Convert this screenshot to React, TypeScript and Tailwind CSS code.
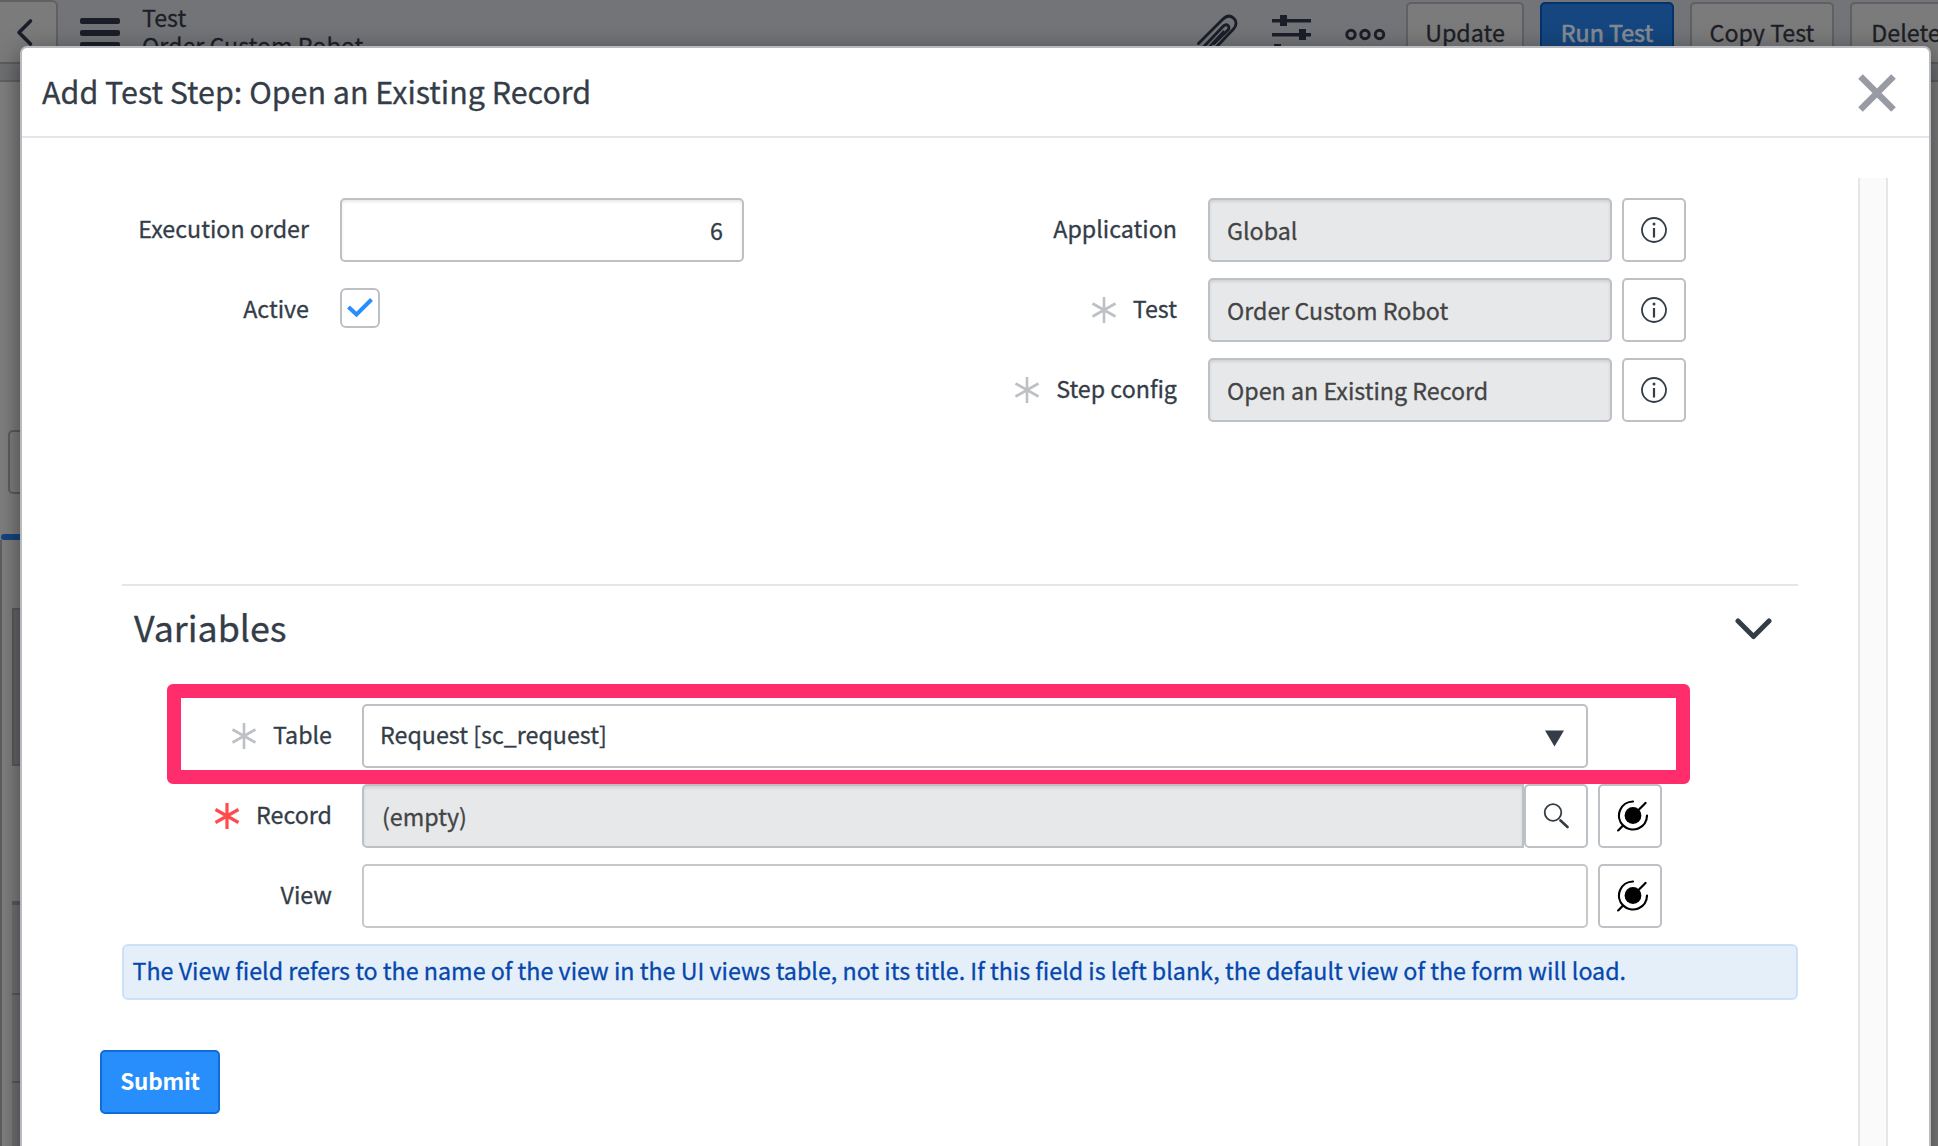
import React from "react";

const Star = ({ red }: { red?: boolean }) => (
  <svg width="26" height="28" viewBox="0 0 26 28" className={red ? "text-[#ff4b4b]" : "text-[#bdc0c4]"}>
    <path d="M13 1v26M1.5 7.5l23 13M24.5 7.5l-23 13" stroke="currentColor" strokeWidth={red ? 3.2 : 2.6} fill="none" />
  </svg>
);

const Label = ({ text, star, className = "" }: { text: string; star?: "gray" | "red"; className?: string }) => (
  <div className={`flex h-16 shrink-0 items-center justify-end gap-4 ${className}`}>
    {star && <Star red={star === "red"} />}
    <span className="-translate-y-px leading-none">{text}</span>
  </div>
);

const box = "flex h-16 shrink-0 items-center rounded-[5px] border-2 border-[#bdc0c4]";
const inner = "shadow-[inset_0_2px_3px_rgba(0,0,0,0.09)]";

const InfoButton = () => (
  <button className={`${box} ml-[10px] w-16 justify-center bg-white`}>
    <svg width="26" height="26" viewBox="0 0 26 26" fill="none" stroke="#343d47">
      <circle cx="13" cy="13" r="12" strokeWidth="1.8" />
      <path d="M13 11v9.5" strokeWidth="2.2" />
      <circle cx="13" cy="7" r="1.5" fill="#343d47" stroke="none" />
    </svg>
  </button>
);

const PillButton = () => (
  <button className={`${box} ml-[10px] w-16 justify-center bg-white`}>
    <svg width="32" height="32" viewBox="0 0 32 32" fill="none" stroke="#000" strokeWidth="2.2" strokeLinecap="round" className="translate-x-[3px] -translate-y-[0.5px]">
      <circle cx="16" cy="16" r="8.4" fill="#000" stroke="none" />
      <path d="M16 2A14 14 0 0 0 6.1 25.900A14 14 0 0 0 30 16M22 10l6.500-6.600M6 26l-5 5.200" />
    </svg>
  </button>
);

const ReadOnly = ({ label, value, star }: { label: string; value: string; star?: "gray" }) => (
  <div className="flex">
    <Label text={label} star={star} className="mr-[31px] w-[201px]" />
    <div className={`${box} ${inner} w-[404px] bg-[#e6e8ea] px-[17px] text-[#444]`}>
      <span>{value}</span>
    </div>
    <InfoButton />
  </div>
);

const barButton = "flex h-16 shrink-0 items-center justify-center rounded-[5px] border-2 pb-[3px] leading-none";

export default function App() {
  return (
    <div className="relative h-[1146px] w-[1938px] overflow-hidden bg-[#808080] font-['Noto_Sans_CJK_SC','Noto_Sans',sans-serif] text-[23.25px] text-[#343d47] [-webkit-text-stroke:0.3px]">
      <div className="flex h-[64px] items-start overflow-hidden border-b-2 border-[#5d5e60] bg-[#737477] text-[#1c1f26]">
        <div className="flex h-[64px] w-[58px] shrink-0 rounded-tr-[6px] border-2 border-l-0 border-[#606060] bg-[#7b7b7b]">
          <svg width="20" height="30" viewBox="0 0 20 30" className="mt-[16px] ml-[15px]" fill="none" stroke="#1b1e28" strokeWidth="3.6" strokeLinecap="round" strokeLinejoin="round">
            <path d="M15.500 3L4 14.500L15.500 26" />
          </svg>
        </div>
        <div className="mt-[18px] ml-[22px] flex w-10 shrink-0 flex-col gap-[6px]">
          <div className="h-[6px] rounded-[2px] bg-[#1b1e28]" />
          <div className="h-[6px] rounded-[2px] bg-[#1b1e28]" />
          <div className="h-[6px] rounded-[2px] bg-[#1b1e28]" />
        </div>
        <div className="mt-[3px] ml-[22px] w-[1050px] shrink-0 leading-[28px]">
          <div>Test</div>
          <div>Order Custom Robot</div>
        </div>
        <svg width="46" height="50" viewBox="0 0 46 50" className="mt-[12px] ml-[4px] shrink-0" fill="none" stroke="#1b1e28" strokeWidth="2.900" strokeLinecap="round">
          <path d="M2.500 31.500L26.500 7.500C31 3 35 3.500 38 6.500C41 9.500 40.500 14 37.500 17L18 37.500M8 34.500L26 15.500C28.500 12.500 30.500 12 32 13.500C33.500 15 33 17 31.500 18.500L18 31.500" />
          <path d="M13 35L27.500 19.500" strokeWidth="2.200" />
        </svg>
        <svg width="40" height="50" viewBox="0 0 40 50" className="mt-0 ml-[30px] shrink-0" fill="#1b1e28">
          <path d="M0 19h39v3.500H0zM8 15h7v11H8zM0 33h39v3.500H0zM27 29h7v11h-7zM0 47h39v3H0zM2 44h7v6H2z" />
        </svg>
        <svg width="42" height="14" viewBox="0 0 42 14" className="mt-[28px] ml-[33px] shrink-0" fill="none" stroke="#1b1e28" strokeWidth="3">
          <circle cx="6" cy="6.500" r="4.200" />
          <circle cx="20" cy="6.500" r="4.200" />
          <circle cx="34.500" cy="6.500" r="4.200" />
        </svg>
        <div className="mt-[2px] ml-[19px] flex shrink-0 gap-4">
          <div className={`${barButton} w-[118px] border-[#5f6063] bg-[#7b7b7b]`}>Update</div>
          <div className={`${barButton} w-[134px] border-[#03336d] bg-[#15467f] text-[#848a92] [-webkit-text-stroke:0.7px]`}>Run Test</div>
          <div className={`${barButton} w-[144px] border-[#5f6063] bg-[#7b7b7b]`}>Copy Test</div>
          <div className={`${barButton} w-[112px] border-[#5f6063] bg-[#7b7b7b]`}>Delete</div>
        </div>
      </div>
      <div className="h-[18px] border-b-2 border-[#626262] bg-[#6e7072]" />
      <div className="mt-[348px] ml-[8px] h-16 w-20 rounded-[5px] border-2 border-[#5f5f5f]" />
      <div className="mt-[40px] ml-[1px] h-[6px] w-20 rounded-[3px] bg-[#15467f]" />
      <div className="h-[620px] border-l-2 border-[#5f5f5f] pt-[68px] pl-[10px]">
        <div className="h-[158px] w-20 border-2 border-[#5c5d5f] bg-[#67696b]" />
        <div className="mt-[135px] h-[92px] w-20 border-t-4 border-[#5c5d5f] bg-[#737476]" />
        <div className="h-[88px] w-20 border-t-2 border-[#5c5d5f] bg-[#737476]" />
        <div className="h-[88px] w-20 border-t-2 border-[#5c5d5f] bg-[#737476]" />
      </div>

      <div className="absolute top-[46px] left-[20px] flex h-[1200px] w-[1911px] flex-col rounded-[7px] border-2 border-[#b9babf] bg-white shadow-[0_8px_26px_rgba(0,0,0,0.5)]">
        <div className="flex h-[90px] shrink-0 items-center border-b-2 border-[#e5e6e7] pr-[33px] pl-[20px]">
          <h1 className="-translate-y-px text-[30.45px] leading-none">Add Test Step: Open an Existing Record</h1>
          <svg width="38" height="38" viewBox="0 0 38 38" className="ml-auto translate-y-px" fill="none" stroke="#989ba3" strokeWidth="6.500">
            <path d="M2.500 2.500l33 33M35.500 2.500l-33 33" />
          </svg>
        </div>
        <div className="mt-[40px] flex flex-1">
          <div className="w-[1836px] shrink-0 pt-[20px]">
            <div className="flex">
              <div className="flex w-[944px] flex-col">
                <div className="flex">
                  <Label text="Execution order" className="mr-[31px] ml-[87px] w-[200px]" />
                  <div className={`${box} ${inner} w-[404px] justify-end px-[19px]`}>
                    <span>6</span>
                  </div>
                </div>
                <div className="mt-4 flex">
                  <Label text="Active" className="mr-[31px] ml-[87px] w-[200px]" />
                  <div className="mt-[10px] flex h-10 w-10 items-center justify-center rounded-[6px] border-2 border-[#bdc0c4]">
                    <svg width="26" height="20" viewBox="0 0 26 20" fill="none" stroke="#278efc" strokeWidth="4">
                      <path d="M1.500 9L9.500 16.500L24.500 1.500" />
                    </svg>
                  </div>
                </div>
              </div>
              <div className="flex flex-col gap-4 pl-[10px]">
                <ReadOnly label="Application" value="Global" />
                <ReadOnly label="Test" value="Order Custom Robot" star="gray" />
                <ReadOnly label="Step config" value="Open an Existing Record" star="gray" />
              </div>
            </div>

            <div className="mt-[162px] ml-[100px] w-[1676px] border-t-2 border-[#e5e6e7]">
              <div className="flex h-[84px] items-center pr-[25px] pl-[12px]">
                <h2 className="-translate-y-px text-[35.8px] leading-none">Variables</h2>
                <svg width="38" height="22" viewBox="0 0 38 22" className="ml-auto translate-y-px" fill="none" stroke="#343d47" strokeWidth="5" strokeLinecap="round" strokeLinejoin="round">
                  <path d="M3 3L18.500 18.500L34 3" />
                </svg>
              </div>
              <div className="relative mt-[34px] flex">
                <Label text="Table" star="gray" className="mr-[30px] w-[210px]" />
                <div className={`${box} w-[1226px] justify-between pr-[22px] pl-[16px]`}>
                  <span className="-translate-y-px leading-none">Request [sc_request]</span>
                  <svg width="19" height="17" viewBox="0 0 19 17" className="translate-y-[2px]" fill="#343d47">
                    <path d="M0 .5h19L9.500 16.500z" />
                  </svg>
                </div>
                <div className="absolute top-[-20px] left-[45px] h-[100px] w-[1523px] rounded-[6px] border-[14px] border-[#ff2d6b]" />
              </div>
              <div className="mt-4 flex">
                <Label text="Record" star="red" className="mr-[30px] w-[210px]" />
                <div className={`${box} ${inner} w-[1162px] rounded-r-none bg-[#e6e8ea] px-[18px] text-[#444]`}>
                  <span>(empty)</span>
                </div>
                <button className={`${box} w-16 justify-center bg-white`}>
                  <svg width="26" height="26" viewBox="0 0 26 26" fill="none" stroke="#343d47" strokeWidth="1.800">
                    <circle cx="10" cy="9.500" r="8.300" />
                    <path d="M17.500 17.500l7 6.500" strokeWidth="2.600" strokeLinecap="round" />
                  </svg>
                </button>
                <PillButton />
              </div>
              <div className="mt-4 flex">
                <Label text="View" className="mr-[30px] w-[210px]" />
                <div className={`${box} w-[1226px] border-[#c8c8c8]`} />
                <PillButton />
              </div>
              <div className="mt-4 flex h-14 items-center rounded-[6px] border-2 border-[#cce0f8] bg-[#e5effa] pl-[8.500px] text-[#0548ad]">
                <span className="-translate-y-px whitespace-nowrap leading-none">The View field refers to the name of the view in the UI views table, not its title. If this field is left blank, the default view of the form will load.</span>
              </div>
            </div>
            <button className="mt-[50px] ml-[78px] flex h-16 w-[120px] items-center justify-center rounded-[5px] border-2 border-[#0f6cd8] bg-[#278efc] pb-[3px] text-[22.5px] font-bold leading-none tracking-[-0.2px] text-white [-webkit-text-stroke:0]">
              Submit
            </button>
          </div>
          <div className="w-[30px] border-x-2 border-[#e6e6e6] bg-[#fafafa]" />
        </div>
      </div>
    </div>
  );
}
